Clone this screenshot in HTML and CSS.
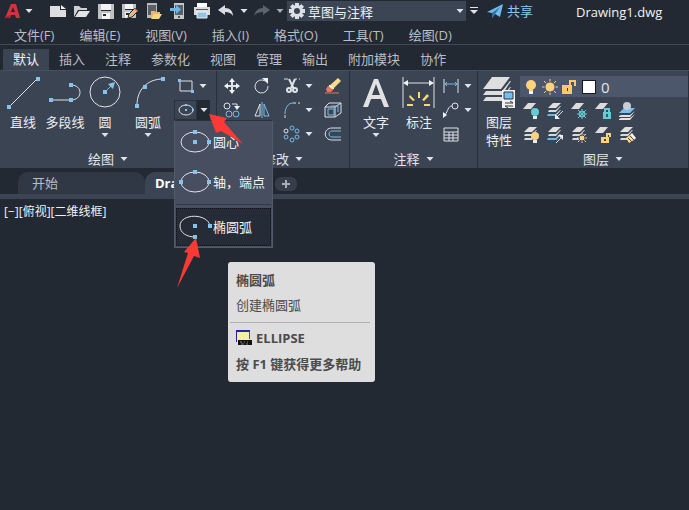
FILE: index.html
```html
<!DOCTYPE html>
<html lang="zh-CN">
<head>
    <meta charset="UTF-8">
    <meta name="viewport" content="width=device-width, initial-scale=1.0">
    <title>Drawing1.dwg</title>
    <link rel="stylesheet" href="styles.css">
</head>
<body>
    <!-- shared shapes -->
    <svg class="sprite" aria-hidden="true">
        <symbol id="caret" viewBox="0 0 8 8"><path d="M0.500 2h7L4 6z" fill="#dfe3ea"/></symbol>
        <symbol id="sheets" viewBox="0 0 18 18">
            <path d="M7 1h8l-5 5H2z" fill="#e0e0e0"/>
            <path d="M11 7l3-3h1l-5 6H2l1-2h7zM11 11l3-3h1l-5 6H2l1-2h7z" fill="#d4d7dc"/>
        </symbol>
        <symbol id="sheet" viewBox="0 0 18 18"><path d="M6 1h8L9 7H1z" fill="#dcdcdc"/></symbol>
    </svg>

    <header class="titlebar">
        <button class="app-menu" aria-label="应用程序菜单">
            <svg width="16" height="16" viewBox="0 0 16 16"><path d="M6 1h5l4 14h-4l-1-3H6l-1 3H0z" fill="#d2333f"/><path d="M8 4l2 5H6z" fill="#222933"/><path d="M0 15l3-2 2-1-1 3z" fill="#9e1f2d"/></svg>
            <svg class="caret"><use href="#caret"/></svg>
        </button>
        <div class="quick">
            <button aria-label="新建"><svg width="16" height="16" viewBox="0 0 16 16"><path d="M0 3h10v4h6v7H0z" fill="#dedede"/><path d="M11 2l5 4h-5z" fill="#f4f4f4"/></svg></button>
            <button aria-label="打开"><svg width="16" height="16" viewBox="0 0 16 16"><path d="M0 14V3h5l2 2h6v2H4z" fill="#d0d0d0"/><path d="M5 8h11l-4 6H1z" fill="#e4e4e4"/></svg></button>
            <button aria-label="保存"><svg width="16" height="16" viewBox="0 0 16 16"><path d="M0 1h16v15H0z" fill="#bfc1c3"/><path d="M3 1h10v6H3zM4 10h8v6H4z" fill="#f3f3f3"/><path d="M3 7h10v1H3zM5 11h3v2H5z" fill="#222933"/></svg></button>
            <button aria-label="另存为"><svg width="16" height="16" viewBox="0 0 16 16"><path d="M0 1h14v14H0z" fill="#bfc1c3"/><path d="M3 1h8v5H3zM3 9h7v6H3z" fill="#f3f3f3"/><path d="M3 6h8v1H3zM4 10h3v2H4z" fill="#222933"/><path d="M6 15l1-4 6-6 3 3-6 6z" fill="#f0b878" stroke="#222933"/><path d="M12 6l1-1 3 3-1 1z" fill="#e47b52"/></svg></button>
            <button aria-label="从移动设备打开"><svg width="16" height="16" viewBox="0 0 16 16"><path d="M1 0h10v15H1z" fill="#b9bbbd"/><path d="M2 2h8v10H2z" fill="#59606a"/><path d="M5 15V8h4l1 1h4v2z" fill="#e9b869"/><path d="M8 11h8l-3 5H5z" fill="#ffd58c"/></svg></button>
            <button aria-label="保存到移动设备"><svg width="16" height="16" viewBox="0 0 16 16"><path d="M4 0h10v16H4z" fill="#c5c7c9"/><path d="M5 2h8v10H5z" fill="#59606a"/><path d="M8 13h2v2H8z" fill="#555"/><path d="M0 5h6V2l5 4.500L6 11V8H0z" fill="#69b7ea"/></svg></button>
            <button aria-label="打印"><svg width="16" height="16" viewBox="0 0 16 16"><path d="M3 0h10v4H3z" fill="#fff"/><path d="M0 4h16v8H0z" fill="#dcdcdc"/><path d="M2 6h12v1H2z" fill="#555b66"/><path d="M3 9h10v6H3z" fill="#8fc4e4" stroke="#f1f1f1"/></svg></button>
            <button aria-label="放弃"><svg width="16" height="16" viewBox="0 0 16 16"><path d="M0 7l7-5v3c5 0 8 3 8 8-2-3-4-4-8-4v3z" fill="#d9dce1"/></svg></button>
            <button class="tiny" aria-label="放弃列表"><svg class="caret"><use href="#caret"/></svg></button>
            <button class="dim" aria-label="重做"><svg width="16" height="16" viewBox="0 0 16 16"><path d="M16 7L9 2v3c-5 0-8 3-9 8 2-3 5-4 9-4v3z" fill="#747c88"/></svg></button>
            <button class="tiny dim" aria-label="重做列表"><svg class="caret"><use href="#caret"/></svg></button>
        </div>
        <label class="workspace">
            <svg width="16" height="16" viewBox="0 0 16 16"><g fill="#dde0e5"><circle cx="8" cy="8" r="6"/><path d="M6 0h4v16H6zM0 6h16v4H0z"/><path d="M6 0h4v16H6zM0 6h16v4H0z" transform="rotate(45 8 8)"/></g><circle cx="8" cy="8" r="3" fill="#3c4554"/></svg>
            <select aria-label="工作空间"><option>草图与注释</option></select>
            <svg class="caret"><use href="#caret"/></svg>
        </label>
        <button class="customize" aria-label="自定义快速访问工具栏"><svg width="8" height="8" viewBox="0 0 8 8"><path d="M0 0h8v1H0zM0 3h8L4 7z" fill="#e0e3e8"/></svg></button>
        <button class="share"><svg width="16" height="16" viewBox="0 0 16 16"><path d="M0 9L16 1l-3 13-5-3-3 4v-5z" fill="#6ebbec"/><path d="M5 10l8-6-5 7-3 4z" fill="#2f6f9f"/></svg>共享</button>
        <span class="doc-title">Drawing1.dwg</span>
    </header>

    <nav class="menubar">
        <a href="#">文件(F)</a><a href="#">编辑(E)</a><a href="#">视图(V)</a><a href="#">插入(I)</a><a href="#">格式(O)</a><a href="#">工具(T)</a><a href="#">绘图(D)</a>
    </nav>

    <nav class="ribbon-tabs">
        <button class="active">默认</button><button>插入</button><button>注释</button><button>参数化</button><button>视图</button><button>管理</button><button>输出</button><button>附加模块</button><button>协作</button>
    </nav>

    <main>
        <div class="ribbon">
            <section class="panel draw">
                <div class="tools">
                    <button class="big line"><svg width="34" height="34" viewBox="0 0 34 34"><path d="M4 30L30 4" class="w"/><path d="M1 29h4v4H1zM30 1h4v4h-4z" class="n"/></svg>直线</button>
                    <button class="big pline"><svg width="34" height="34" viewBox="0 0 34 34"><path d="M3 24h20M23 9c12 0 12 15 0 15" class="w"/><path d="M1 22h4v4H1zM21 22h4v4h-4zM21 7h4v4h-4z" class="n"/></svg>多段线</button>
                    <button class="big circle"><svg width="34" height="34" viewBox="0 0 34 34"><circle cx="17" cy="16" r="15" class="w"/><path d="M17 16l7-7" class="b"/><path d="M15 14h4v4h-4zM20 8l7-2-2 7z" class="n"/></svg>圆<svg class="caret"><use href="#caret"/></svg></button>
                    <button class="big arc"><svg width="34" height="34" viewBox="0 0 34 34"><path d="M6 29C6 14 16 3 32 3" class="w"/><path d="M4 28h4v4H4zM12 9h4v4h-4zM30 1h4v4h-4z" class="n"/></svg>圆弧<svg class="caret"><use href="#caret"/></svg></button>
                    <div class="stack">
                        <button class="split" aria-label="矩形"><svg width="18" height="18" viewBox="0 0 18 18"><path d="M3 4h12v10H3z" class="w"/><path d="M1 2h3v3H1zM14 13h3v3h-3z" class="n"/></svg><svg class="caret"><use href="#caret"/></svg></button>
                        <div class="flyout">
                            <button class="split open" aria-label="椭圆"><span class="face"><svg width="18" height="18" viewBox="0 0 18 18"><ellipse cx="9" cy="9" rx="7" ry="5" class="w"/><path d="M8 3h2v2H8zM8 8h2v2H8zM15 8h2v2h-2z" class="n"/></svg></span><span class="drop"><svg class="caret"><use href="#caret"/></svg></span></button>
                            <div class="gallery">
                                <button><svg width="34" height="28" viewBox="0 0 34 28"><ellipse cx="16" cy="14" rx="14" ry="10" class="w"/><path d="M14 2h4v4h-4zM14 12h4v4h-4zM28 12h4v4h-4z" class="n"/></svg>圆心</button>
                                <button><svg width="34" height="28" viewBox="0 0 34 28"><ellipse cx="16" cy="14" rx="14" ry="10" class="w"/><path d="M14 2h4v4h-4zM0 12h4v4H0zM28 12h4v4h-4z" class="n"/></svg>轴，端点</button>
                                <hr>
                                <button class="current"><svg width="34" height="28" viewBox="0 0 34 28"><path d="M31 13C29 0 1 0 1 13c0 7 7 11 15 11" class="w"/><path d="M14 11h4v4h-4zM29 11h4v4h-4zM14 22h4v4h-4z" class="n"/></svg>椭圆弧</button>
                            </div>
                            <div class="tooltip" role="tooltip">
                                <strong>椭圆弧</strong>
                                <p>创建椭圆弧</p>
                                <hr>
                                <div class="command"><svg width="16" height="16" viewBox="0 0 16 16"><path d="M1 1h12v12H1z" fill="#f2efa0"/><path d="M0 0h14v2H1v10H0z" fill="#2222a8"/><path d="M13 2h1v7h-1z" fill="#55564a"/><path d="M2 10h14v5H2z" fill="#111"/><path d="M4 12h2M8 12h1M11 12h1M5 14h3M10 14h2" stroke="#888"/></svg>ELLIPSE</div>
                                <strong>按 F1 键获得更多帮助</strong>
                            </div>
                            <svg class="pointer to-drop" width="36" height="32" viewBox="0 0 36 32"><path d="M1 0l18 4-3 4 19 22-22-13-5 2z"/></svg>
                            <svg class="pointer to-item" width="24" height="50" viewBox="0 0 24 50"><path d="M19 0l4 20-6-2L0 50l11-35-4-1z"/></svg>
                        </div>
                    </div>
                </div>
                <h2>绘图<svg class="caret"><use href="#caret"/></svg></h2>
            </section>

            <section class="panel modify">
                <div class="tools grid">
                    <button aria-label="移动"><svg width="18" height="18" viewBox="0 0 18 18"><path d="M9 3v12M3 9h12" class="w thick"/><path d="M9 1l3 4H6zM9 17l3-4H6zM1 9l4-3v6zM17 9l-4-3v6z" fill="#f0f2f5"/></svg></button>
                    <button aria-label="旋转"><svg width="18" height="18" viewBox="0 0 18 18"><path d="M12 4a6.500 6.500 0 1 0 3 5" class="w"/><path d="M9 1h6v6z" fill="#f0f2f5"/></svg></button>
                    <button aria-label="修剪"><svg width="18" height="18" viewBox="0 0 18 18"><path d="M1 2h4M12 2h2M16 2h1" class="w"/><path d="M6 2l5 10M12 2L8 11" class="w thick"/><circle cx="6" cy="13" r="2" class="w thick"/><circle cx="12" cy="13" r="2" class="w thick"/></svg><svg class="caret"><use href="#caret"/></svg></button>
                    <button aria-label="删除"><svg width="18" height="18" viewBox="0 0 18 18"><path d="M14 1l3 3-9 9-4-3z" fill="#f7dc8a"/><path d="M4 9l5 4-2 2H3l-1-3z" fill="#ed7462"/><path d="M5 8l5 4" stroke="#fff"/><path d="M1 16h14" stroke="#e6725f"/></svg></button>
                    <button aria-label="复制"><svg width="18" height="18" viewBox="0 0 18 18"><circle cx="4" cy="5" r="3" class="w"/><circle cx="6" cy="13" r="3" class="b"/><circle cx="13" cy="13" r="3" class="b"/><path d="M9 3h5v4" class="w"/><path d="M11 5h6l-3 4z" fill="#f0f2f5"/></svg></button>
                    <button aria-label="镜像"><svg width="18" height="18" viewBox="0 0 18 18"><path d="M7 3v12H2z" class="w"/><path d="M11 3v12h5z" class="b"/><path d="M9 1v16" class="b"/></svg></button>
                    <button aria-label="圆角"><svg width="18" height="18" viewBox="0 0 18 18"><path d="M2 17v-3M10 2h3M15 2h2" class="w"/><path d="M2 13C2 7 5 2 10 2" class="b"/></svg><svg class="caret"><use href="#caret"/></svg></button>
                    <button aria-label="分解"><svg width="18" height="18" viewBox="0 0 18 18"><path d="M1 6h10v10H1zM1 6l4-4h12l-6 4M17 2v10l-6 4" class="w"/><path d="M4 8h6v6H4zM7 5h7v6" class="b"/></svg></button>
                    <button aria-label="拉伸"><svg width="18" height="18" viewBox="0 0 18 18"><path d="M2 5h10v8H2z" class="w"/></svg></button>
                    <button aria-label="缩放"><svg width="18" height="18" viewBox="0 0 18 18"><path d="M2 8h8v8H2z" class="w"/></svg></button>
                    <button aria-label="阵列"><svg width="18" height="18" viewBox="0 0 18 18"><g class="b"><circle cx="9" cy="3" r="2"/><circle cx="14" cy="6" r="2"/><circle cx="14" cy="12" r="2"/><circle cx="9" cy="15" r="2"/><circle cx="3" cy="12" r="2"/></g><circle cx="3" cy="6" r="2" class="w"/></svg><svg class="caret"><use href="#caret"/></svg></button>
                    <button aria-label="偏移"><svg width="18" height="18" viewBox="0 0 18 18"><path d="M17 3H8C-1 3-1 15 8 15h9" class="w"/><path d="M17 6H8c-4 0-4 6 0 6h9" class="b"/></svg></button>
                </div>
                <h2>修改<svg class="caret"><use href="#caret"/></svg></h2>
            </section>

            <section class="panel annotate">
                <div class="tools">
                    <button class="big"><svg width="34" height="34" viewBox="0 0 34 34"><path d="M15 3h4l11 28h-5l-3-8H12l-3 8H4zM17 8l-4 11h8z" fill="#e2e2e2"/></svg>文字<svg class="caret"><use href="#caret"/></svg></button>
                    <button class="big"><svg width="34" height="34" viewBox="0 0 34 34"><path d="M1 1v31M32 1v31M3 7h27" class="w"/><path d="M1 7l5-3v6zM32 7l-5-3v6z" fill="#f0f2f5"/><path d="M16 16h2v6h-2zM8 19l5 5-2 1-4-4zM25 18l-5 6 2 1 5-5zM5 28h6v2H5zM22 28h6v2h-6z" fill="#f7d878"/></svg>标注</button>
                    <div class="stack">
                        <button class="split" aria-label="线性"><svg width="18" height="18" viewBox="0 0 18 18"><path d="M2 2v14M16 2v14" class="w"/><path d="M3 7h12M5 5L3 7l2 2M13 5l2 2-2 2" class="b"/></svg><svg class="caret"><use href="#caret"/></svg></button>
                        <button class="split" aria-label="引线"><svg width="18" height="18" viewBox="0 0 18 18"><circle cx="13" cy="5" r="3" class="w"/><path d="M10 5C6 5 6 10 3 14" class="w"/><path d="M1 17v-6l4 3z" fill="#f0f2f5"/></svg><svg class="caret"><use href="#caret"/></svg></button>
                        <button class="split" aria-label="表格"><svg width="18" height="18" viewBox="0 0 18 18"><path d="M2 3h14v13H2zM2 7h14M2 10h14M2 13h14M7 7v9M11 7v9" class="w"/></svg></button>
                    </div>
                </div>
                <h2>注释<svg class="caret"><use href="#caret"/></svg></h2>
            </section>

            <section class="panel layers">
                <div class="layers-inner">
                    <div class="tools">
                        <button class="big"><svg width="34" height="34" viewBox="0 0 34 34"><path d="M10 1h18l-9 12H1zM1 19l3-4h16l8-10h1l-9 14zM1 25l3-4h16l8-10h1l-9 14z" fill="#dedede"/><path d="M20 14h13v18H20z" fill="#f2f2f2"/><path d="M22 16h9v7h-9z" fill="#73bff0" stroke="#30343c"/><path d="M23 27h8M23 30h8M28 25l3 2M23 30l3 2" stroke="#30343c"/></svg>图层<br>特性</button>
                        <div class="layer-side">
                            <label class="layer-select">
                                <svg width="16" height="16" viewBox="0 0 16 16"><circle cx="8" cy="6" r="5" fill="#ffd27b"/><path d="M6 10h4v2H6z" fill="#ffd27b"/><path d="M6 12h4v3H6z" fill="#f2f2f2"/></svg>
                                <svg width="16" height="16" viewBox="0 0 16 16"><path d="M8 0v16M0 8h16M2 2l12 12M14 2L2 14" stroke="#f2d18b"/><circle cx="8" cy="8" r="5" fill="#ffd27b" stroke="#4a5568"/></svg>
                                <svg width="16" height="16" viewBox="0 0 16 16"><path d="M1 6h10v9H1z" fill="#fcc96b"/><path d="M9 6V2h5v5" fill="none" stroke="#fcc96b" stroke-width="2"/><path d="M6 9h1v3H6z" fill="#4a3b22"/></svg>
                                <span class="swatch"></span>
                                <select aria-label="图层"><option>0</option></select>
                            </label>
                            <div class="layer-tools">
                                <button aria-label="关"><svg width="18" height="18" viewBox="0 0 18 18"><use href="#sheet"/><circle cx="13" cy="10" r="4" fill="#65ccd3"/><path d="M11 14h4v3h-4z" fill="#e3eef0"/></svg></button>
                                <button aria-label="隔离"><svg width="18" height="18" viewBox="0 0 18 18"><use href="#sheets"/><path d="M2 12h9v2H1z" fill="#69b7ea"/><path d="M17 9l-6 6" class="w"/><path d="M9 17v-5l5 5z" fill="#f0f2f5"/></svg></button>
                                <button aria-label="冻结"><svg width="18" height="18" viewBox="0 0 18 18"><use href="#sheet"/><path d="M12 7v10M7 12h10M8 8l8 8M16 8l-8 8" stroke="#65ccd3"/><circle cx="12" cy="12" r="3" fill="none" stroke="#65ccd3"/></svg></button>
                                <button aria-label="锁定"><svg width="18" height="18" viewBox="0 0 18 18"><use href="#sheet"/><path d="M9 10h8v7H9z" fill="#65ccd3"/><path d="M11 10V7h4v3" fill="none" stroke="#65ccd3" stroke-width="2"/><path d="M12 12h2v3h-2z" fill="#29616a"/></svg></button>
                                <button aria-label="置为当前"><svg width="18" height="18" viewBox="0 0 18 18"><path d="M1 11l5-5h11l-5 5z" fill="#75bff0"/><path d="M1 14l2-1h9l5-4-5 6H1zM1 17l2-1h9l5-4-5 6H1z" fill="#e3e3e3"/><circle cx="9" cy="4" r="4" fill="#cacdd1"/></svg></button>
                                <button aria-label="打开所有图层"><svg width="18" height="18" viewBox="0 0 18 18"><use href="#sheets"/><circle cx="13" cy="10" r="4" fill="#fbd383"/><path d="M11 14h4v3h-4z" fill="#eee"/></svg></button>
                                <button aria-label="取消隔离"><svg width="18" height="18" viewBox="0 0 18 18"><use href="#sheets"/><path d="M2 12h9v2H1z" fill="#69b7ea"/><path d="M10 17l6-6" class="w"/><path d="M17 9v5l-5-5z" fill="#f0f2f5"/></svg></button>
                                <button aria-label="解冻所有图层"><svg width="18" height="18" viewBox="0 0 18 18"><use href="#sheets"/><path d="M12 7v10M7 12h10M8 8l8 8M16 8l-8 8" stroke="#f4d39a"/><circle cx="12" cy="12" r="3" fill="#fbd383" stroke="#3b4453"/></svg></button>
                                <button aria-label="解锁"><svg width="18" height="18" viewBox="0 0 18 18"><use href="#sheet"/><path d="M7 11h8v6H7z" fill="#fcd37c"/><path d="M13 11V8h3v3" fill="none" stroke="#fcd37c" stroke-width="2"/><path d="M10 13h2v2h-2z" fill="#554428"/></svg></button>
                                <button aria-label="匹配图层"><svg width="18" height="18" viewBox="0 0 18 18"><use href="#sheets"/><path d="M8 12l4-3 4 5-5 3z" fill="#fbd98f"/><path d="M12 9l2-2 4 5-2 2z" fill="#f4f4f4"/><path d="M10 12l4 4M12 10l4 4" stroke="#5b4a2b"/></svg></button>
                            </div>
                        </div>
                    </div>
                    <h2>图层<svg class="caret"><use href="#caret"/></svg></h2>
                </div>
            </section>
        </div>

        <nav class="file-tabs">
            <button>开始</button>
            <button class="active">Drawing1</button>
            <button class="add" aria-label="新图形"><svg width="10" height="10" viewBox="0 0 10 10"><path d="M4 1h2v3h3v2H6v3H4V6H1V4h3z" fill="#a9afb9"/></svg></button>
        </nav>
        <div class="canvas">[−][俯视][二维线框]</div>
    </main>
</body>
</html>
```
FILE: styles.css
```css
* {
    box-sizing: border-box;
}
body {
    margin: 0;
    min-height: 100vh;
    background-color: #222933;
    color: #e1e4e9;
    font-family: "Open Sans", "Noto Sans CJK SC", sans-serif;
    font-size: 13px;
    line-height: 18px;
    overflow: hidden;
}
button, select {
    border: 0;
    padding: 0;
    background: none;
    color: inherit;
    font: inherit;
    cursor: pointer;
}
a {
    color: inherit;
    text-decoration: none;
}
svg {
    flex: none;
    display: block;
}
.sprite {
    position: absolute;
    width: 0;
    height: 0;
}
.caret {
    width: 8px;
    height: 8px;
}
.w {
    fill: none;
    stroke: #dfe3e8;
}
.b {
    fill: none;
    stroke: #78bce8;
}
.n {
    fill: #86c3ec;
}
.thick {
    stroke-width: 2;
}

/* title bar */
.titlebar {
    display: flex;
    align-items: center;
    height: 22px;
    padding-left: 5px;
}
.titlebar button {
    display: flex;
    align-items: center;
}
.app-menu {
    gap: 4px;
    margin-right: 17px;
}
.quick {
    display: flex;
    gap: 8px;
    margin-right: 5px;
}
.quick .tiny {
    margin: 0 -2px;
}
.dim {
    opacity: 0.7;
}
.workspace {
    display: flex;
    align-items: center;
    width: 179px;
    height: 20px;
    padding: 0 2px;
    background-color: #3c4554;
}
.workspace select {
    flex: 1;
    min-width: 0;
    margin-left: 3px;
    padding-top: 2px;
    appearance: none;
    color: #eef0f3;
}
.customize {
    margin: 0 9px 0 4px;
}
.share {
    gap: 4px;
    color: #8fc9ee;
}
.doc-title {
    margin-left: 43px;
    padding-top: 2px;
    color: #f0f2f4;
}

/* menus */
.menubar {
    display: flex;
    gap: 25px;
    height: 23px;
    padding: 4px 14px 0;
    border-bottom: 1px solid #434a55;
    color: #b9bec6;
}
.ribbon-tabs {
    display: flex;
    height: 25px;
    padding: 4px 3px 0;
    color: #b9bec6;
}
.ribbon-tabs button {
    padding: 0 10px 2px;
}
.ribbon-tabs .active {
    background-color: #3b4453;
    color: #f1f3f5;
}

/* ribbon */
.ribbon {
    display: flex;
    height: 98px;
    background-color: #3b4453;
    border-top: 1px solid #464f5d;
}
.panel {
    display: flex;
    flex-direction: column;
    flex: none;
    border-right: 1px solid #28303b;
}
.tools {
    display: flex;
    height: 80px;
    padding-top: 5px;
}
.panel h2 {
    display: flex;
    align-items: center;
    justify-content: center;
    gap: 6px;
    margin: 0;
    font-size: 13px;
    font-weight: 400;
    line-height: 16px;
}
.big {
    display: flex;
    flex-direction: column;
    align-items: center;
    color: #eceef1;
}
.big > svg:first-child {
    margin-bottom: 3px;
}
.stack {
    display: flex;
    flex-direction: column;
    gap: 4px;
}
.split {
    display: flex;
    align-items: center;
    gap: 4px;
    height: 20px;
}
.draw {
    width: 217px;
}
.draw .tools {
    padding-left: 4px;
}
.line {
    width: 38px;
}
.pline {
    width: 46px;
}
.circle {
    width: 34px;
}
.arc {
    width: 52px;
}
.draw .split {
    width: 36px;
    padding-left: 3px;
}
.draw .open {
    padding: 0;
    gap: 0;
}
.face {
    display: flex;
    align-items: center;
    justify-content: center;
    width: 23px;
    height: 20px;
    border: 1px solid #2a323d;
}
.drop {
    display: flex;
    align-items: center;
    justify-content: center;
    width: 13px;
    height: 20px;
    background-color: #222a34;
}
.modify {
    width: 133px;
}
.modify .grid {
    display: grid;
    grid-template-columns: 30px 30px 42px 28px;
    grid-template-rows: repeat(3, 24px);
    padding-top: 3px;
}
.grid button {
    display: flex;
    align-items: center;
    justify-content: center;
    gap: 4px;
}
.annotate {
    width: 128px;
}
.annotate .tools {
    gap: 9px;
    padding-left: 9px;
}
.annotate .stack {
    margin-left: -3px;
}
.layers {
    flex: 1;
    min-width: 0;
    overflow: hidden;
}
.layers-inner {
    min-width: 250px;
}
.layers .tools {
    padding-left: 4px;
}
.layer-side {
    flex: 1;
    margin-left: 4px;
}
.layer-select {
    display: flex;
    align-items: center;
    gap: 3px;
    height: 21px;
    padding-left: 3px;
    background-color: #4c576b;
}
.swatch {
    width: 14px;
    height: 14px;
    margin: 0 2px;
    border: 1px solid #15181d;
    background-color: #fff;
}
.layer-select select {
    flex: 1;
    appearance: none;
    font-size: 15px;
}
.layer-tools {
    display: grid;
    grid-template-columns: repeat(5, 24px);
    grid-template-rows: 24px 24px;
    padding: 2px 0 0 2px;
}
.layer-tools button {
    display: flex;
    align-items: center;
}

/* ellipse drop-down, laid over the drawing */
.flyout {
    position: relative;
    z-index: 2;
}
.gallery {
    position: absolute;
    top: 20px;
    left: 0;
    width: 99px;
    padding: 1px;
    border: 1px solid #535b6b;
    border-top-color: #29313c;
    background-color: #464e60;
}
.gallery button {
    display: flex;
    align-items: center;
    width: 100%;
    height: 40px;
    padding-left: 3px;
    color: #f2f3f5;
    white-space: nowrap;
}
.gallery hr {
    height: 1px;
    margin: 2px 0 3px;
    border: 0;
    background-color: #313946;
}
.gallery .current {
    height: 38px;
    padding-left: 2px;
    border: 1px dotted #0f1217;
    background-color: #252c37;
}
.tooltip {
    position: absolute;
    top: 162px;
    left: 54px;
    width: 147px;
    padding: 9px 5px 9px 8px;
    border-radius: 3px;
    background-color: #dedede;
    color: #4b4b4b;
    white-space: nowrap;
}
.tooltip p {
    margin: 7px 0 8px;
}
.tooltip strong {
    display: block;
}
.tooltip hr {
    height: 1px;
    margin: 0 0 6px -6px;
    border: 0;
    background-color: #b2b3ac;
}
.command {
    display: flex;
    align-items: center;
    gap: 4px;
    margin-bottom: 8px;
    font-weight: 700;
}
.pointer {
    position: absolute;
    fill: #fb3a36;
    pointer-events: none;
}
.to-drop {
    top: 14px;
    left: 34px;
}
.to-item {
    top: 138px;
    left: 3px;
}

/* drawing tabs */
.file-tabs {
    display: flex;
    align-items: flex-end;
    height: 31px;
    padding-left: 18px;
    border-bottom: 5px solid #3b4453;
}
.file-tabs button {
    width: 127px;
    height: 22px;
    padding-left: 14px;
    border-radius: 10px 10px 0 0;
    background-color: #303846;
    color: #b9bec6;
    text-align: left;
}
.file-tabs .active {
    padding-left: 10px;
    background-color: #3b4453;
    color: #fff;
    font-weight: 700;
}
.file-tabs .add {
    display: flex;
    align-items: center;
    justify-content: center;
    width: 22px;
    height: 14px;
    margin: 0 0 3px 3px;
    padding: 0;
    border-radius: 6px;
    background-color: #363e4b;
}
.canvas {
    padding: 4px;
    color: #f0f1f3;
    font-size: 12px;
}
```
